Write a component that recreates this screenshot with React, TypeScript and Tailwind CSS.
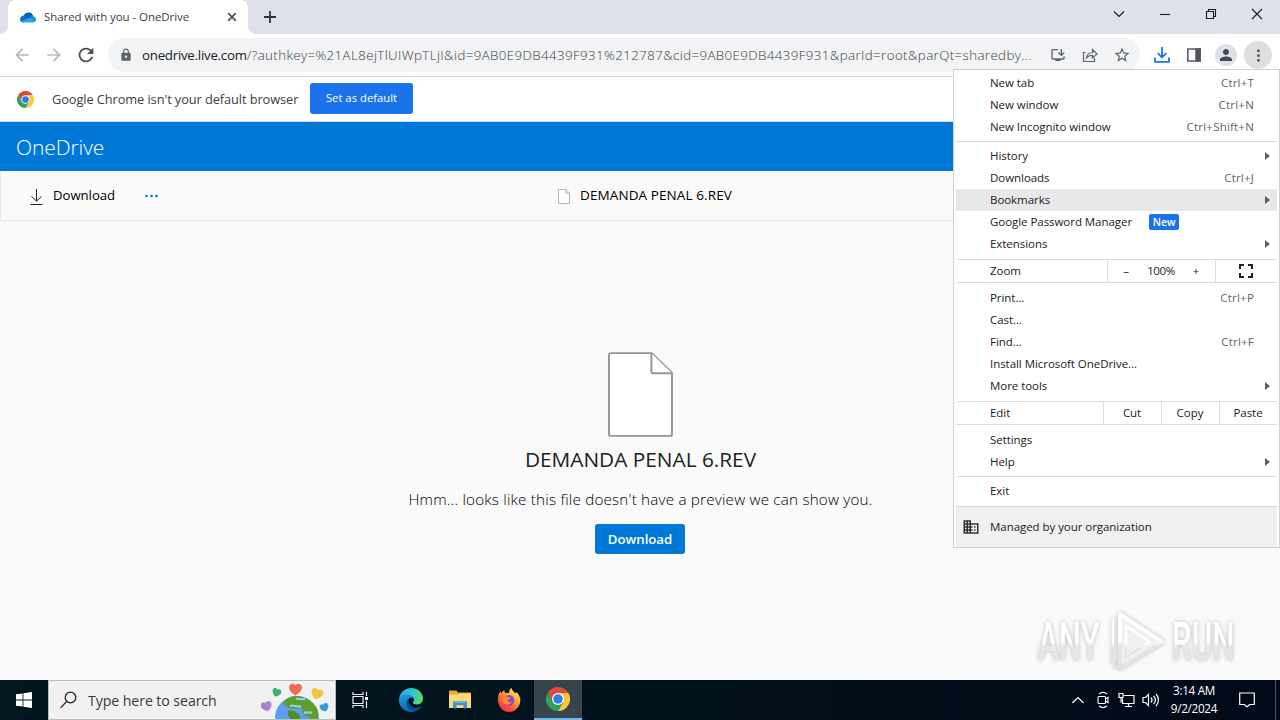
import type { ReactNode } from 'react';
import {
  MdArrowBack,
  MdArrowForward,
  MdRefresh,
  MdLock,
  MdOutlineInstallDesktop,
  MdStarBorder,
  MdMoreVert,
  MdPerson,
  MdBusiness,
  MdFullscreen,
} from 'react-icons/md';

export default function App() {
  return (
    <div className="relative flex h-[720px] w-[1280px] flex-col overflow-hidden bg-[#fafafa] font-['Open_Sans','Noto_Sans',sans-serif] text-[#202124]">
      <TabStrip />
      <Toolbar />
      <InfoBar />
      <header className="flex h-[49px] shrink-0 items-center bg-[#0078d7] pl-4 pt-0.5">
        <span className="text-[21px] font-light tracking-[-0.1px] text-white">OneDrive</span>
      </header>
      <CommandBar />
      <Preview />
      <Taskbar />
      <ChromeMenu />
      <Watermark />
    </div>
  );
}

function TabStrip() {
  return (
    <div className="flex h-[34px] shrink-0 items-stretch bg-[#dee1e9]">
      <Foot side="left" />
      <div className="flex w-[240px] items-center rounded-t-lg bg-white pl-3 pr-2.5">
        <OneDriveCloud />
        <span className="ml-2 flex-1 whitespace-nowrap text-[11.5px] tracking-[-0.07px] text-[#3c4043]">Shared with you - OneDrive</span>
        <svg width="12" height="12" viewBox="0 0 12 12" className="text-[#505458]" stroke="currentColor" strokeWidth="1.7">
          <path d="M2.2 2.2l7.6 7.6M9.8 2.2L2.2 9.8" />
        </svg>
      </div>
      <Foot side="right" />
      <div className="ml-2 flex items-center">
        <svg width="12" height="12" viewBox="0 0 12 12" stroke="#303336" strokeWidth="1.8">
          <path d="M6 0v12M0 6h12" />
        </svg>
      </div>
      <div className="ml-auto flex items-center pb-1.5">
        <WinButton><path d="M1 3.5l5 5 5-5" /></WinButton>
        <WinButton><path d="M1 6.5h10" /></WinButton>
        <WinButton><path d="M1.5 3.5h7v7h-7zM3.5 3.5v-2h7v7h-2" /></WinButton>
        <WinButton><path d="M1 1l10 10M11 1L1 11" /></WinButton>
      </div>
    </div>
  );
}

function Foot({ side }: { side: 'left' | 'right' }) {
  return (
    <div className="flex w-2 items-end bg-white">
      <div className={side === 'left' ? 'h-full w-2 rounded-br-lg bg-[#dee1e9]' : 'h-full w-2 rounded-bl-lg bg-[#dee1e9]'} />
    </div>
  );
}

function WinButton({ children }: { children: ReactNode }) {
  return (
    <div className="flex w-[46px] justify-center">
      <svg width="12" height="12" viewBox="0 0 12 12" fill="none" stroke="#1a1a1a" strokeWidth="1.1">{children}</svg>
    </div>
  );
}

function Toolbar() {
  return (
    <div className="flex h-[43px] shrink-0 items-center border-b border-[#d5d8dc] bg-white pl-3 text-[#5f6368]">
      <MdArrowBack size={20} className="text-[#b6b9bc]" />
      <MdArrowForward size={20} className="ml-3 text-[#b6b9bc]" />
      <MdRefresh size={22} className="ml-[11px] text-[#4b4f53]" />
      <div className="ml-[11px] flex h-[34px] w-[1032px] items-center rounded-full bg-[#f1f3f4] pl-[11px]">
        <MdLock size={14} className="shrink-0" />
        <div className="ml-[9px] w-[900px] shrink-0 whitespace-nowrap pt-px text-[13.3px]">
          <span className="tracking-[-0.26px] text-[#202124]">onedrive.live.com</span>
          <span className="font-light tracking-[0.4px] text-[#3c4043]">/?authkey=%21AL8ejTlUIWpTLjI&amp;id=9AB0E9DB4439F931%212787&amp;cid=9AB0E9DB4439F931&amp;parId=root&amp;parQt=sharedby...</span>
        </div>
        <MdOutlineInstallDesktop size={16} className="ml-2 shrink-0" />
        <svg width="16" height="16" viewBox="0 0 16 16" className="ml-4 shrink-0" fill="none" stroke="currentColor" strokeWidth="1.2">
          <path d="M3.500 5.500H1.500v9h11V11" />
          <path d="M4.500 11c.5-4 2.500-5.500 6-5.500V2.500L15 7l-4.500 4V8.300c-2.500 0-4.500.7-6 2.700z" />
        </svg>
        <MdStarBorder size={18} className="ml-[15px] shrink-0" />
      </div>
      <svg width="16" height="16" viewBox="0 0 16 16" className="ml-[14px]" fill="none" stroke="#1a73e8" strokeWidth="1.8">
        <path d="M8 0v10M3.800 6.200L8 10.400l4.200-4.200M1 10.500v4.300h14v-4.300" />
      </svg>
      <svg width="14" height="14" viewBox="0 0 14 14" className="ml-[17px]" fill="none" stroke="#5a5d61" strokeWidth="1.6">
        <path d="M.8 1h12.400v12H.8z" />
        <path d="M9 1h4.200v12H9z" fill="#4d5054" />
      </svg>
      <div className="ml-[14px] flex size-[22px] items-center justify-center rounded-full bg-[#dfe1e8] text-[#43475a]">
        <MdPerson size={18} />
      </div>
      <div className="ml-[7px] flex size-7 items-center justify-center rounded-full bg-[#dedede]">
        <MdMoreVert size={19} />
      </div>
    </div>
  );
}

function InfoBar() {
  return (
    <div className="flex h-[45px] shrink-0 items-center border-b border-[#d9dce0] bg-white pl-[17px]">
      <ChromeLogo size={17} />
      <span className="ml-[18px] w-[258px] whitespace-nowrap pt-0.5 text-[12.8px] tracking-[-0.08px] text-[#3c4043]">Google Chrome isn't your default browser</span>
      <button className="mb-px h-[31px] w-[103px] rounded-[3px] bg-[#1a73e8] text-[11.3px] text-white">Set as default</button>
    </div>
  );
}

function CommandBar() {
  return (
    <div className="flex h-[50px] shrink-0 items-center border-b border-l border-[#eaeaea] bg-[#fafafa] pl-7 text-[13.2px] text-black">
      <svg width="14" height="16" viewBox="0 0 14 16" fill="none" stroke="#222" className="mt-0.5">
        <path d="M7.500 0v12M2.500 7.500l5 4.500 5-4.500M1.500 15.500h12" />
      </svg>
      <span className="ml-2.5 w-[92px] tracking-[-0.05px]">Download</span>
      <svg width="14" height="4" viewBox="0 0 14 4" fill="#0078d4">
        <circle cx="1.500" cy="2" r="1.300" />
        <circle cx="6.500" cy="2" r="1.300" />
        <circle cx="11.500" cy="2" r="1.300" />
      </svg>
      <svg width="12" height="15" viewBox="0 0 12 15" fill="white" stroke="#b5b5b5" className="ml-[399px] mt-px">
        <path d="M.5.5h7.500l3.500 3.500v10.500H.5zM8 .5V4h3.500" />
      </svg>
      <span className="ml-2.5 whitespace-nowrap text-[13.500px] tracking-[0.1px]">DEMANDA PENAL 6.REV</span>
    </div>
  );
}

function Preview() {
  return (
    <main className="flex flex-1 flex-col items-center pl-px pt-[131px]">
      <svg width="65" height="85" viewBox="0 0 66 86" fill="white" stroke="#979797" strokeWidth="2" strokeLinejoin="round">
        <path d="M3 1h41.500L65 21v62a2 2 0 0 1-2 2H3a2 2 0 0 1-2-2V3a2 2 0 0 1 2-2z" />
        <path d="M44 1v18.500a2 2 0 0 0 2 2h19" />
      </svg>
      <h1 className="mt-2 whitespace-nowrap text-[20.800px] leading-[28px]">DEMANDA PENAL 6.REV</h1>
      <p className="mt-[14px] whitespace-nowrap text-[15.200px] font-light leading-[24px] tracking-[0.21px] text-black">Hmm... looks like this file doesn't have a preview we can show you.</p>
      <button className="mr-px mt-[13px] h-[30px] w-[90px] rounded-[3px] bg-[#0078d7] pt-px text-[13.200px] font-semibold text-white">Download</button>
    </main>
  );
}

function ChromeMenu() {
  return (
    <div className="absolute left-[953px] top-[69px] h-[479px] w-[327px] border border-[#cfcfcf] bg-white px-0.5 pt-0.5 text-[11.5px] tracking-[-0.05px] text-[#202124]">
      <MenuItem label="New tab" keys="Ctrl+T" />
      <MenuItem label="New window" keys="Ctrl+N" />
      <MenuItem label="New Incognito window" keys="Ctrl+Shift+N" />
      <Separator />
      <MenuItem label="History" submenu />
      <MenuItem label="Downloads" keys="Ctrl+J" />
      <MenuItem label="Bookmarks" submenu active />
      <MenuItem label="Google Password Manager" badge="New" />
      <MenuItem label="Extensions" submenu />
      <div className="my-1 flex h-6 items-stretch border-y border-[#dadce0]">
        <span className="flex w-[151px] items-center pl-[34px]">Zoom</span>
        <div className="flex w-[109px] items-center border-x border-[#dadce0]">
          <span className="w-9 text-center">–</span>
          <span className="w-[34px] text-center tracking-[-0.4px]">100%</span>
          <span className="w-9 text-center">+</span>
        </div>
        <span className="flex flex-1 items-center justify-center pr-0.5"><MdFullscreen size={24} /></span>
      </div>
      <MenuItem label="Print..." keys="Ctrl+P" />
      <MenuItem label="Cast..." />
      <MenuItem label="Find..." keys="Ctrl+F" />
      <MenuItem label="Install Microsoft OneDrive..." />
      <MenuItem label="More tools" submenu />
      <div className="my-1 flex h-6 items-stretch border-y border-[#dadce0]">
        <span className="flex w-[147px] items-center pl-[34px]">Edit</span>
        <span className="flex w-[58px] items-center justify-center border-l border-[#dadce0] pr-px">Cut</span>
        <span className="flex w-[58px] items-center justify-center border-l border-[#dadce0] pr-px">Copy</span>
        <span className="flex w-[58px] items-center justify-center border-l border-[#dadce0] pr-px">Paste</span>
      </div>
      <MenuItem label="Settings" />
      <MenuItem label="Help" submenu />
      <Separator />
      <MenuItem label="Exit" />
      <div className="mt-1 flex h-[41px] items-center border-t border-[#d5d5d5] bg-[#f0f0f0] pl-1.5">
        <MdBusiness size={18} className="text-[#2f3235]" />
        <span className="ml-2.5">Managed by your organization</span>
      </div>
    </div>
  );
}

type MenuItemProps = {
  label: string;
  keys?: string;
  badge?: string;
  submenu?: boolean;
  active?: boolean;
};

function MenuItem({ label, keys, badge, submenu, active }: MenuItemProps) {
  return (
    <div className={`flex h-[22px] items-center whitespace-nowrap pl-[34px] pr-[7px] ${active ? 'bg-[#e8e8e8]' : ''}`}>
      <span>{label}</span>
      {badge && (
        <span className="ml-[17px] flex h-4 w-[30px] items-center justify-center rounded-[2px] bg-[#1a73e8] pt-px text-[10.500px] font-semibold text-white">{badge}</span>
      )}
      {keys && <span className="ml-auto pr-4 tracking-[0.2px] text-[#5f6368]">{keys}</span>}
      {submenu && (
        <svg width="5" height="8" viewBox="0 0 5 8" fill="#5f6368" className="ml-auto">
          <path d="M0 0l5 4-5 4z" />
        </svg>
      )}
    </div>
  );
}

function Separator() {
  return <div className="mb-[3px] mt-[3px] h-px bg-[#dadce0]" />;
}

function Taskbar() {
  return (
    <div className="flex h-10 shrink-0 items-stretch bg-gradient-to-r from-[#01161e] via-[#01121c] to-[#020918] text-white">
      <div className="flex w-12 items-center justify-center">
        <svg width="16" height="16" viewBox="0 0 16 16" fill="white">
          <path d="M0 2.300l6.600-.9v6.200H0zM7.400 1.300L16 0v7.600H7.400zM0 8.400h6.600v6.200L0 13.700zM7.400 8.400H16V16l-8.600-1.300z" />
        </svg>
      </div>
      <div className="flex w-[288px] items-center border border-[#b9bcbe] bg-[#f1f1f1] pl-[11px] text-[#3a3a3a]">
        <svg width="17" height="18" viewBox="0 0 17 18" fill="none" stroke="#222" strokeWidth="1.300">
          <circle cx="10.500" cy="6.500" r="5.300" />
          <path d="M6.800 10.400L.7 16.800" />
        </svg>
        <span className="ml-[11px] w-[173px] whitespace-nowrap pt-0.5 text-[14.200px] tracking-[-0.1px]">Type here to search</span>
        <Globe />
      </div>
      <div className="flex w-12 items-center justify-center">
        <svg width="17" height="16" viewBox="0 0 17 16" fill="none" stroke="#e8eef0" strokeWidth="1.200">
          <path d="M1 0v2.500h10V0M1 16v-2.500h10V16M1 4.500h10v7H1zM14.500 0v4M14.500 9v7" />
          <path d="M13 5h3v3h-3z" fill="white" stroke="none" />
        </svg>
      </div>
      <div className="flex w-[53px] items-center justify-center"><EdgeLogo /></div>
      <div className="flex w-[46px] items-center justify-center"><FolderIcon /></div>
      <div className="flex w-[51px] items-center justify-center"><FirefoxLogo /></div>
      <div className="flex w-12 items-center justify-center border-b-2 border-[#76b9ed] bg-[#36454d]">
        <ChromeLogo size={24} />
      </div>
      <div className="ml-auto flex items-center">
        <svg width="12" height="12" viewBox="0 0 12 12" fill="none" stroke="white" strokeWidth="1.200">
          <path d="M.5 9L6 3.500 11.500 9" />
        </svg>
        <svg width="14" height="18" viewBox="0 0 14 18" fill="none" stroke="white" strokeWidth="1.100" className="ml-3">
          <path d="M3 5.500h5.500q1 0 1 1v5q0 1-1 1H3q-1 0-1-1v-5q0-1 1-1zM9.500 8L12 6.300v5.400L9.500 10M3 3c2.500-2 5.500-2 8 0M3 15c2.500 2 5.500 2 8 0" />
        </svg>
        <svg width="17" height="16" viewBox="0 0 17 16" fill="none" stroke="white" strokeWidth="1.200" className="ml-2">
          <path d="M6 3.500h10v8H4.500V6.500M10.500 11.500v3M7 14.500h7M1 1.500h4v4H1zM3 5.500v5" />
        </svg>
        <svg width="18" height="16" viewBox="0 0 18 16" fill="none" stroke="white" strokeWidth="1.200" className="ml-[7px]">
          <path d="M1 5.500h2.500l3-3v11l-3-3H1zM9 5.500c1.300 1.500 1.300 3.500 0 5M11.500 3.800c2.300 2.500 2.300 5.900 0 8.400M14 2c3.200 3.500 3.200 8.500 0 12" />
        </svg>
        <div className="-mt-0.5 ml-[7px] flex w-[54px] flex-col text-center text-[11.700px] leading-[18px] tracking-[-0.300px]">
          <span>3:14 AM</span>
          <span>9/2/2024</span>
        </div>
        <svg width="16" height="16" viewBox="0 0 16 16" fill="none" stroke="white" strokeWidth="1.200" className="ml-[18px]">
          <path d="M.7 1h14.600v11.500h-4.800L8 15l-2.500-2.500H.7z" />
        </svg>
        <div className="ml-5 h-10 w-[5px] border-l border-[#4a5563]" />
      </div>
    </div>
  );
}

function OneDriveCloud() {
  return (
    <svg width="16" height="11" viewBox="0 0 16 11">
      <path d="M3.200 4.200C4.300 1.500 7-.1 9.600.6c2 .5 3.200 1.900 3.700 3.600L8 7z" fill="#0364b8" />
      <path d="M3.500 10.600C1.500 10.600 0 9.200 0 7.300c0-2.200 1.900-3.700 4.100-3.400l6.400 4z" fill="#0f6cc4" />
      <path d="M8 6.600l2-1.500c3.300-2 6-.2 6 2.500 0 .8-.3 1.500-.7 2z" fill="#1490df" />
      <path d="M1 9.300l7.300-3.100 7.200 3.300c-.6.700-1.500 1.100-2.500 1.100H3.500c-1 0-2-.5-2.500-1.300z" fill="#28a8ea" />
    </svg>
  );
}

function ChromeLogo({ size }: { size: number }) {
  return (
    <svg width={size} height={size} viewBox="0 0 48 48">
      <path d="M24 12h20.800A24 24 0 0 0 3.200 12l10.400 18z" fill="#e04a3c" />
      <path d="M34.400 30L24 48A24 24 0 0 0 44.800 12H24z" fill="#fcc934" />
      <path d="M13.600 30L3.200 12A24 24 0 0 0 24 48l10.400-18z" fill="#2fa057" />
      <circle cx="24" cy="24" r="12" fill="white" />
      <circle cx="24" cy="24" r="9.500" fill="#2a7bee" />
    </svg>
  );
}

function EdgeLogo() {
  return (
    <svg width="24" height="24" viewBox="0 0 24 24">
      <defs>
        <linearGradient id="edgeTop" x1="0" y1="0.300" x2="1" y2="0.500">
          <stop offset="0" stopColor="#2aa7e4" />
          <stop offset="0.550" stopColor="#31c5cf" />
          <stop offset="1" stopColor="#5bdc69" />
        </linearGradient>
        <linearGradient id="edgeSide" x1="0" y1="0" x2="0.600" y2="1">
          <stop offset="0" stopColor="#1ba0e2" />
          <stop offset="1" stopColor="#0f5fb4" />
        </linearGradient>
      </defs>
      <path d="M0 11.500C.5 5 5.500 0 12 0c7 0 12 5 12 10.500 0 4-3 6-6.200 6-2.600 0-4-.9-4-1.700 0-.6 1.200-1.300 1.200-3 0-2.600-2.500-4.300-6-4.300C4.500 7.500 1.300 8.800 0 11.500z" fill="url(#edgeTop)" />
      <path d="M0 12C0 8.500 4 6 8.500 6.500 12.500 7 15 9 15 11.800c-.3-1.600-1.800-2.300-3.200-2-3 .6-4.200 4-2.800 7.200 1.900 4.300 7 5 11.500 3.300C18.500 22.500 15.500 24 12 24 5.400 24 0 18.600 0 12z" fill="url(#edgeSide)" />
      <path d="M9 10.800c-3.300 3.500-1.500 10.600 4 11.900 4 .9 7.500-1.200 9.300-3.700.3-.4 0-.8-.5-.5-4.800 2.400-10.500.8-11.700-3-.5-1.700-.2-3.600-1.100-4.700z" fill="#114a8b" />
    </svg>
  );
}

function FolderIcon() {
  return (
    <svg width="22" height="20" viewBox="0 0 22 20">
      <path d="M0 1.500C0 .7.500.5 1 .5h6.500l1.500 2h12c.6 0 1 .3 1 1V18H0z" fill="#e8a33d" />
      <path d="M0 4.500h9l1.500-1H22V18H0z" fill="#fcd978" />
      <path d="M4 18.500v-6c0-.8.500-1.300 1.300-1.300h11.400c.8 0 1.300.5 1.300 1.300v6h-3.500v-3.200h-7v3.200z" fill="#3b92cf" />
      <path d="M5.500 11.200h11v1.800h-11z" fill="#67b8e8" />
    </svg>
  );
}

function FirefoxLogo() {
  return (
    <svg width="24" height="24" viewBox="0 0 24 24">
      <defs>
        <linearGradient id="fox" x1="0.850" y1="0.050" x2="0.200" y2="1">
          <stop offset="0" stopColor="#fff04a" />
          <stop offset="0.350" stopColor="#ffb02e" />
          <stop offset="0.650" stopColor="#ff5b3d" />
          <stop offset="1" stopColor="#e8236b" />
        </linearGradient>
      </defs>
      <path d="M1 10c.2-3 1.300-5.500 2.700-7 0 1 .3 1.800.8 2.400C5.300 4 6.300 2.600 7.500 2c-.2 1.200 0 2 .5 2.700l4.200.3C12 3 12.800 1 14.500 0c.4 2.500 2.500 3.800 4.200 5.500.4-.3.4-1 .2-1.800C22 6 23.500 9.500 23.300 13c-.4 6.200-5.300 11-11.300 11C5.500 24 .3 18 1 10z" fill="url(#fox)" />
      <circle cx="12" cy="12.300" r="5.300" fill="#8b43d6" />
      <path d="M4.500 9c2.500-1.500 4.500-1 6 .3 1.500-.2 2.800.2 3.500.8-.8 1.200-2.500 1.300-3.500 2 .2 1.800 2.500 2.800 4.500 1.500-1 3.200-5 4.200-7.800 2C5.500 14 4.500 11.500 4.500 9z" fill="#ff8a2b" />
    </svg>
  );
}

// Search highlight: a globe rising from the taskbar with hearts around it
function Globe() {
  return (
    <svg width="68" height="38" viewBox="0 0 68 38">
      <circle cx="36" cy="37" r="22" fill="#5f9df2" />
      <path d="M22 22c4-6 10-7.500 15-7 9 1 17 7 20 15v8h-8c-1-3-4-2-6-4-3-3 0-5-3-7-2-1-3 1-6 1-3-1-5-1-7-1-1-2-4-2-5-5z" fill="#5f9e2b" />
      <path d="M27 30c4-1 7 0 9 2 2 1 4 2 3 6h-9c-3-2-4-5-3-8z" fill="#4f8f2a" />
      <path d="M35 18c3-1 5 1 9 0M29 25c4-2 6 2 11 0M43 32c3-2 5 1 8-1" stroke="#8fd3f2" strokeWidth="2.200" fill="none" />
      <Heart x={28} y={2} size={13} color="#f06a58" turn={0} />
      <Heart x={11} y={7} size={9} color="#3fae6e" turn={20} />
      <Heart x={50} y={7} size={12} color="#f2c440" turn={15} />
      <Heart x={0} y={20} size={11} color="#a884d2" turn={-15} />
      <Heart x={59} y={22} size={9} color="#3a9ae0" turn={-20} />
    </svg>
  );
}

function Heart({ x, y, size, color, turn }: { x: number; y: number; size: number; color: string; turn: number }) {
  return (
    <g transform={`translate(${x} ${y}) scale(${size / 12}) rotate(${turn} 6 6)`}>
      <path d="M6 11.500C2 9 0 7 0 4 0 .5 4.300-.3 6 2c1.700-2.300 6-1.500 6 2 0 3-2 5-6 7.500z" fill={color} />
    </g>
  );
}

function Watermark() {
  return (
    <div className="absolute left-[1038px] top-[610px] flex h-16 w-[198px] items-center justify-between drop-shadow-[0_0_2px_rgba(0,0,0,0.26)]">
      <WatermarkWord>ANY</WatermarkWord>
      <svg width="58" height="62" viewBox="0 0 58 62" fill="none" strokeLinejoin="round" className="shrink-0">
        <defs>
          <linearGradient id="mark" x1="0" y1="0" x2="0" y2="1">
            <stop offset="0.500" stopColor="#ffffff" />
            <stop offset="0.600" stopColor="#e4e4e4" />
          </linearGradient>
        </defs>
        <path d="M12 3v54l42-26z" stroke="url(#mark)" strokeWidth="4" fill="#f0f0f0" />
        <path d="M5 8v45l5 4M18 15v31l24-15z" stroke="url(#mark)" strokeWidth="2.500" />
      </svg>
      <WatermarkWord>RUN</WatermarkWord>
    </div>
  );
}

function WatermarkWord({ children }: { children: string }) {
  return (
    <div className="w-[64px]">
      <span className="inline-block origin-left scale-x-[0.58] bg-gradient-to-b from-white from-50% to-[#e6e6e6] to-60% bg-clip-text font-['Roboto',sans-serif] text-[54px] font-medium leading-none text-transparent">
        {children}
      </span>
    </div>
  );
}
